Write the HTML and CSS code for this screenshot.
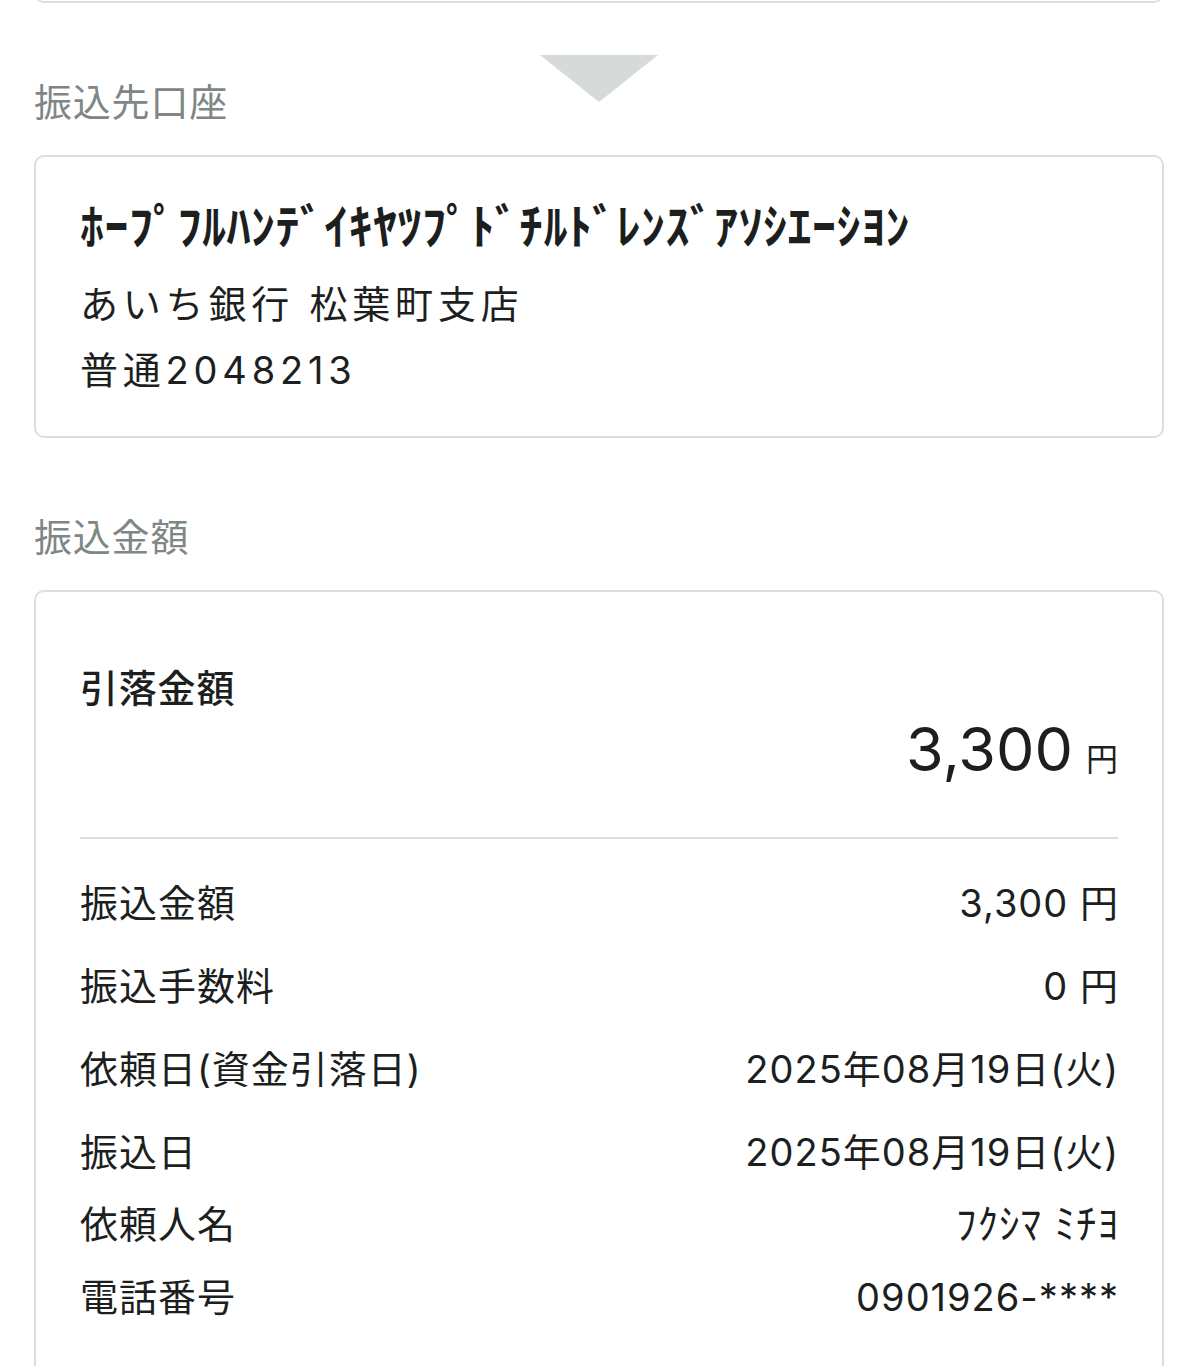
FILE: index.html
```html
<!DOCTYPE html>
<html lang="ja">
<head>
    <meta charset="UTF-8">
    <meta name="viewport" content="width=device-width, initial-scale=1.0">
    <title>振込内容確認</title>
    <link rel="stylesheet" href="styles.css">
</head>
<body>
    <div class="page">
        <!-- 前のカード（下端のみ表示） -->
        <div class="card card-prev"></div>

        <div class="section-head with-arrow">
            <div class="arrow"></div>
            <h2 class="section-title">振込先口座</h2>
        </div>
        <div class="card account-card">
            <p class="payee">ﾎｰﾌﾟﾌﾙﾊﾝﾃﾞｲｷﾔﾂﾌﾟﾄﾞﾁﾙﾄﾞﾚﾝｽﾞｱｿｼｴｰｼﾖﾝ</p>
            <p class="bank-line">あいち銀行 松葉町支店</p>
            <p class="bank-line">普通2048213</p>
        </div>

        <div class="section-head">
            <h2 class="section-title">振込金額</h2>
        </div>
        <div class="card amount-card">
            <h3 class="total-label">引落金額</h3>
            <div class="total-amount">
                <span class="total-num">3,300</span><span class="total-yen">円</span>
            </div>
            <hr class="divider">

            <dl class="detail-list">
                <div class="detail-row"><dt>振込金額</dt><dd>3,300 円</dd></div>
                <div class="detail-row"><dt>振込手数料</dt><dd>0 円</dd></div>
                <div class="detail-row"><dt>依頼日(資金引落日)</dt><dd>2025年08月19日(火)</dd></div>
                <div class="detail-row"><dt>振込日</dt><dd>2025年08月19日(火)</dd></div>
            </dl>
            <dl class="detail-list compact">
                <div class="detail-row"><dt>依頼人名</dt><dd class="kana">ﾌｸｼﾏ ﾐﾁﾖ</dd></div>
                <div class="detail-row"><dt>電話番号</dt><dd>0901926-****</dd></div>
            </dl>
        </div>
    </div>
</body>
</html>
```

FILE: styles.css
```css
* {
    margin: 0;
    padding: 0;
    box-sizing: border-box;
}
body {
    background: #fff;
    color: #1d1f1f;
    font-family: "Inter", "Noto Sans CJK JP", sans-serif;
    font-size: 38px;
    letter-spacing: 0.8px;
    overflow: hidden;
}
.page {
    padding: 0 34px;
}
.card {
    background: #fff;
    border: 2px solid #dcdfde;
    border-radius: 10px;
}
.card-prev {
    height: 26px;
    margin-top: -23px;
}

/* セクション見出し */
.section-head {
    margin-top: 74px;
}
.section-head.with-arrow {
    display: grid;
    margin-top: 0;
    padding-top: 52px;
}
.with-arrow .arrow,
.with-arrow .section-title {
    grid-area: 1 / 1;
}
.arrow {
    justify-self: center;
    align-self: start;
    width: 0;
    height: 0;
    border-left: 59px solid transparent;
    border-right: 59px solid transparent;
    border-top: 47px solid #d6dad9;
}
.section-title {
    font-size: 38px;
    font-weight: 400;
    line-height: 50px;
    color: #7f8785;
}
.with-arrow .section-title {
    margin-top: 22px;
}

/* 振込先口座 */
.account-card {
    margin-top: 28px;
    padding: 40px 44px 33px;
}
.payee {
    font-size: 48px;
    font-weight: 700;
    line-height: 60px;
    letter-spacing: 0.5px;
    margin-bottom: 14px;
}
.bank-line {
    line-height: 66px;
    letter-spacing: 4.8px;
}

/* 振込金額 */
.amount-card {
    margin-top: 28px;
    padding: 66px 44px 200px;
}
.total-label {
    font-size: 38px;
    font-weight: 500;
    line-height: 60px;
}
.total-amount {
    text-align: right;
    line-height: 62px;
    letter-spacing: 0;
}
.total-num {
    font-size: 61px;
}
.total-yen {
    font-size: 32px;
    margin-left: 13px;
}
.divider {
    border: 0;
    border-top: 2px solid #dcdcdc;
    margin-top: 46px;
}
.detail-list {
    display: flex;
    flex-direction: column;
    gap: 33px;
    margin-top: 39px;
}
.detail-list.compact {
    gap: 23px;
    margin-top: 22px;
}
.detail-row {
    display: flex;
    justify-content: space-between;
    line-height: 50px;
}
.detail-row dt {
    letter-spacing: 1px;
}
.detail-row dd {
    text-align: right;
    letter-spacing: 1px;
    margin-right: -1px;
}
.detail-row .kana {
    font-size: 41px;
    letter-spacing: 1px;
}
```
